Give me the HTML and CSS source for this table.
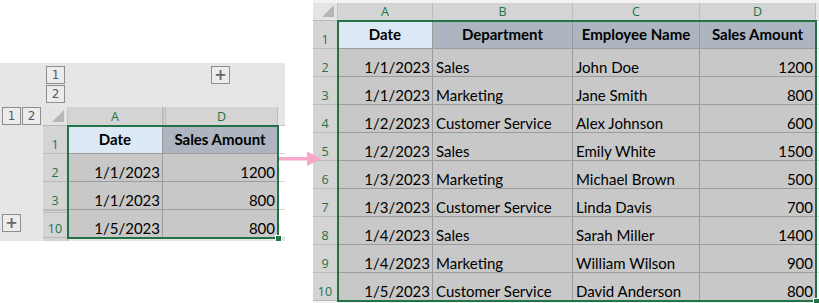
FILE: index.html
```html
<!DOCTYPE html>
<html>
<head>
<meta charset="utf-8">
<link rel="stylesheet" href="styles.css">
</head>
<body>
<div class="page">
  <div class="left">
    <div class="outline-top">
      <div class="lvl-v"><span class="btn">1</span><span class="btn">2</span></div>
      <span class="btn plus plus-top">+</span>
    </div>
    <div class="left-body">
      <div class="outline-left">
        <div class="lvl-h"><span class="btn">1</span><span class="btn">2</span></div>
        <span class="btn plus plus-left">+</span>
      </div>
      <div class="sheet sheet-left">
        <div class="corner"></div>
        <div class="ch">A</div>
        <div class="ch dbl">D</div>
        <div class="ch ext"></div>

        <div class="rh">1</div>
        <div class="c hd blue">Date</div>
        <div class="c hd">Sales Amount</div>
        <div class="e"></div>

        <div class="rh">2</div>
        <div class="c num">1/1/2023</div>
        <div class="c num">1200</div>
        <div class="e"></div>

        <div class="rh">3</div>
        <div class="c num">1/1/2023</div>
        <div class="c num">800</div>
        <div class="e"></div>

        <div class="rh dblr">10</div>
        <div class="c num">1/5/2023</div>
        <div class="c num">800</div>
        <div class="e"></div>

        <div class="rh tail"></div>
        <div class="tailrest"></div>

        <div class="sel sel-left"><span class="handle"></span></div>
      </div>
    </div>
  </div>

  <div class="right">
    <div class="sheet sheet-right">
      <div class="corner"></div>
      <div class="ch">A</div>
      <div class="ch">B</div>
      <div class="ch">C</div>
      <div class="ch">D</div>
      <div class="ch ext"></div>

      <div class="rh">1</div>
      <div class="c hd blue">Date</div>
      <div class="c hd">Department</div>
      <div class="c hd">Employee Name</div>
      <div class="c hd">Sales Amount</div>
      <div class="e"></div>

      <div class="rh">2</div><div class="c num">1/1/2023</div><div class="c">Sales</div><div class="c">John Doe</div><div class="c num">1200</div><div class="e"></div>
      <div class="rh">3</div><div class="c num">1/1/2023</div><div class="c">Marketing</div><div class="c">Jane Smith</div><div class="c num">800</div><div class="e"></div>
      <div class="rh">4</div><div class="c num">1/2/2023</div><div class="c">Customer Service</div><div class="c">Alex Johnson</div><div class="c num">600</div><div class="e"></div>
      <div class="rh">5</div><div class="c num">1/2/2023</div><div class="c">Sales</div><div class="c">Emily White</div><div class="c num">1500</div><div class="e"></div>
      <div class="rh">6</div><div class="c num">1/3/2023</div><div class="c">Marketing</div><div class="c">Michael Brown</div><div class="c num">500</div><div class="e"></div>
      <div class="rh">7</div><div class="c num">1/3/2023</div><div class="c">Customer Service</div><div class="c">Linda Davis</div><div class="c num">700</div><div class="e"></div>
      <div class="rh">8</div><div class="c num">1/4/2023</div><div class="c">Sales</div><div class="c">Sarah Miller</div><div class="c num">1400</div><div class="e"></div>
      <div class="rh">9</div><div class="c num">1/4/2023</div><div class="c">Marketing</div><div class="c">William Wilson</div><div class="c num">900</div><div class="e"></div>
      <div class="rh">10</div><div class="c num">1/5/2023</div><div class="c">Customer Service</div><div class="c">David Anderson</div><div class="c num">800</div><div class="e"></div>

      <div class="sel sel-right"><span class="handle"></span></div>
    </div>
  </div>

  <svg class="arrow" width="44" height="18" viewBox="0 0 44 18">
    <rect x="0" y="7" width="30" height="3.5" fill="#f7a8c8"/>
    <polygon points="28,1.5 42.5,8.75 28,16" fill="#f7a8c8"/>
  </svg>
</div>
</body>
</html>
```

FILE: styles.css
```css
* { box-sizing: border-box; }
html, body { margin: 0; padding: 0; background: #fff; }
body { width: 819px; height: 303px; overflow: hidden; font-family: Lato, "Open Sans", sans-serif; color: #000; }

.page { position: relative; display: flex; align-items: flex-start; width: 819px; height: 303px; }

/* ---------- left panel ---------- */
.left { margin-top: 63px; width: 285px; height: 178px; background: #e6e6e6; display: flex; flex-direction: column; }
.outline-top { height: 44px; display: flex; align-items: flex-start; padding: 3px 0 0 46px; }
.lvl-v { display: flex; flex-direction: column; gap: 1px; }
.plus-top { margin-left: 146px; }
.left-body { display: flex; flex: 1; }
.outline-left { width: 43px; display: flex; flex-direction: column; padding-left: 2px; }
.lvl-h { display: flex; gap: 1px; }
.plus-left { margin-top: 89px; }

.btn { width: 19px; height: 18px; border: 1px solid #8e8e8e; background: #ececec; color: #5a5a5a; font: 12px "DejaVu Sans", sans-serif; display: flex; align-items: center; justify-content: center; line-height: 1; }
.plus { font-size: 15px; font-weight: bold; color: #666; }

/* ---------- sheets ---------- */
.sheet { display: grid; position: relative; }
.sheet-left { grid-template-columns: 25px 95px 115px 7px; grid-template-rows: 19px repeat(4, 28px) 3px; }
.right { margin-left: 28px; width: 506px; height: 303px; background: #f2f2f2; padding-top: 3px; }
.sheet-right { grid-template-columns: 25px 95px 140px 127px 116px 3px; grid-template-rows: 18px repeat(10, 28px); }

.corner { background: #e4e4e4; border-right: 1px solid #c4c4c4; border-bottom: 1px solid #b8b8b8; position: relative; }
.corner::after { content: ""; position: absolute; right: 3px; bottom: 3px; width: 0; height: 0; border-left: 12px solid transparent; border-bottom: 12px solid #b6b6b6; }

.ch { background: #d4d4d4; border-right: 1px solid #bdbdbd; border-bottom: 1px solid #a8a8a8; color: #217346; font: 12.5px "Open Sans", sans-serif; display: flex; align-items: flex-end; justify-content: center; padding-bottom: 1px; line-height: 15px; }
.ch.dbl { border-left: 3px double #bdbdbd; }
.ch.ext { background: #e6e6e6; border-right: none; border-bottom-color: #c8c8c8; }

.rh { background: #d4d4d4; border-right: 1px solid #a8a8a8; border-bottom: 1px solid #bababa; color: #217346; font: 12.5px "Open Sans", sans-serif; display: flex; align-items: flex-end; justify-content: center; padding-bottom: 1px; line-height: 15px; }
.rh.dblr { border-top: 3px double #bababa; }
.rh.tail { border-bottom: none; }
.tailrest { grid-column: 2 / -1; background: #e6e6e6; }

.c { background: #c8c8c8; border-right: 1px solid #9c9c9c; border-bottom: 1px solid #9c9c9c; font-size: 15px; line-height: 18px; display: flex; align-items: flex-end; padding: 0 3px 0 3px; white-space: nowrap; overflow: hidden; }
.c.num { justify-content: flex-end; padding-right: 2px; }
.c.hd { font-weight: bold; justify-content: center; align-items: center; padding: 0 2px 1px; background: #acb5c0; }
.c.hd.blue { background: #dce8f4; }
.e { background: #fff; border-bottom: 1px solid #d4d4d4; }

/* selection overlays: absolutely positioned inside their grid area */
.sel { position: absolute; top: -1px; left: -1px; right: -1px; bottom: -1px; border: 2px solid #217346; pointer-events: none; }
.sel-left { grid-column: 2 / 4; grid-row: 2 / 6; }
.sel-right { grid-column: 2 / 6; grid-row: 2 / 12; }
.handle { position: absolute; right: -5px; bottom: -5px; width: 7px; height: 7px; background: #217346; border: 1px solid #fff; }

.arrow { position: absolute; left: 279px; top: 150px; }
```
